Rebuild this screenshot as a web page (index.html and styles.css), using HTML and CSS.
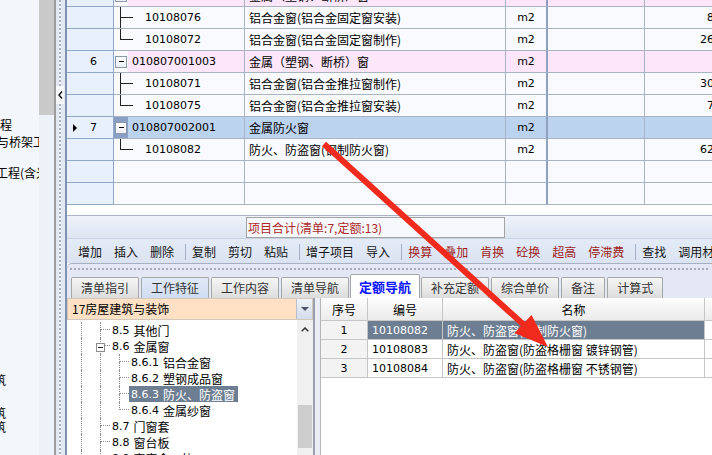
FILE: index.html
```html
<!DOCTYPE html>
<html lang="zh-CN">
<head>
<meta charset="utf-8">
<title>定额导航</title>
<link rel="stylesheet" href="styles.css">
</head>
<body>
<div class="app">
  <aside class="nav">
    <div class="nav-list">
      <div class="nav-item i1">工程</div>
      <div class="nav-item i2">与桥架工程</div>
      <div class="nav-item i3">工程(含光缆)</div>
      <div class="nav-item i4">建筑</div>
      <div class="nav-item i5">建筑</div>
      <div class="nav-item i6">建筑</div>
    </div>
    <div class="nav-scroll"><div class="nav-thumb"></div></div>
  </aside>
  <div class="divider"></div>
  <div class="splitter">
    <div class="collapse"><svg width="5" height="8" viewBox="0 0 5 8"><path d="M4 0.5 L1 4 L4 7.5" fill="none" stroke="#111" stroke-width="1.4"/></svg></div>
  </div>
  <main class="work">
    <div class="grid-view">
      <div class="rows">
        <div class="row pk">
          <div class="rh"><span class="no">5</span></div>
          <div class="code"><span class="exp"><span class="box"><i></i></span></span><span class="ctext">010807001002</span></div>
          <div class="name">金属（塑钢、断桥）窗</div>
          <div class="unit">m2</div><div class="c5"></div><div class="qty"></div>
        </div>
        <div class="row">
          <div class="rh"></div>
          <div class="code leaf"><span class="tl"><b class="up"></b><b class="dn"></b></span><span class="ltext">10108076</span></div>
          <div class="name">铝合金窗(铝合金固定窗安装)</div>
          <div class="unit">m2</div><div class="c5"></div><div class="qty">8</div>
        </div>
        <div class="row">
          <div class="rh"></div>
          <div class="code leaf"><span class="tl end"><b class="up"></b><b class="dn"></b></span><span class="ltext">10108072</span></div>
          <div class="name">铝合金窗(铝合金固定窗制作)</div>
          <div class="unit">m2</div><div class="c5"></div><div class="qty">26</div>
        </div>
        <div class="row pk">
          <div class="rh"><span class="no">6</span></div>
          <div class="code"><span class="exp"><span class="box"><i></i></span></span><span class="ctext">010807001003</span></div>
          <div class="name">金属（塑钢、断桥）窗</div>
          <div class="unit">m2</div><div class="c5"></div><div class="qty"></div>
        </div>
        <div class="row">
          <div class="rh"></div>
          <div class="code leaf"><span class="tl"><b class="up"></b><b class="dn"></b></span><span class="ltext">10108071</span></div>
          <div class="name">铝合金窗(铝合金推拉窗制作)</div>
          <div class="unit">m2</div><div class="c5"></div><div class="qty">30</div>
        </div>
        <div class="row">
          <div class="rh"></div>
          <div class="code leaf"><span class="tl end"><b class="up"></b><b class="dn"></b></span><span class="ltext">10108075</span></div>
          <div class="name">铝合金窗(铝合金推拉窗安装)</div>
          <div class="unit">m2</div><div class="c5"></div><div class="qty">7</div>
        </div>
        <div class="row sel">
          <div class="rh"><span class="mark"></span><span class="no">7</span></div>
          <div class="code"><span class="exp"><span class="box"><i></i></span></span><span class="ctext">010807002001</span></div>
          <div class="name">金属防火窗</div>
          <div class="unit">m2</div><div class="c5"></div><div class="qty"></div>
        </div>
        <div class="row">
          <div class="rh"></div>
          <div class="code leaf"><span class="tl end"><b class="up"></b><b class="dn"></b></span><span class="ltext">10108082</span></div>
          <div class="name">防火、防盗窗(钢制防火窗)</div>
          <div class="unit">m2</div><div class="c5"></div><div class="qty">62</div>
        </div>
        <div class="row">
          <div class="rh"></div><div class="code"></div><div class="name"></div>
          <div class="unit"></div><div class="c5"></div><div class="qty"></div>
        </div>
        <div class="row">
          <div class="rh"></div><div class="code"></div><div class="name"></div>
          <div class="unit"></div><div class="c5"></div><div class="qty"></div>
        </div>
      </div>
    </div>
    <div class="grid-foot"></div>
    <div class="status"><div class="summary">项目合计(清单:7,定额:13)</div></div>
    <div class="toolbar">
      <span class="grip"></span>
      <span class="tb">增加</span><span class="tb">插入</span><span class="tb">删除</span>
      <span class="sep"></span>
      <span class="tb">复制</span><span class="tb">剪切</span><span class="tb">粘贴</span>
      <span class="sep"></span>
      <span class="tb">增子项目</span><span class="tb">导入</span>
      <span class="sep"></span>
      <span class="tb red">换算</span><span class="tb red">叠加</span><span class="tb red">肯换</span><span class="tb red">砼换</span><span class="tb red">超高</span><span class="tb red">停滞费</span>
      <span class="sep"></span>
      <span class="tb">查找</span><span class="tb">调用材料</span>
    </div>
    <section class="panel">
      <div class="hgrip"></div>
      <div class="tabs">
        <span class="tab">清单指引</span>
        <span class="tab hot">工作特征</span>
        <span class="tab">工作内容</span>
        <span class="tab">清单导航</span>
        <span class="tab on">定额导航</span>
        <span class="tab">补充定额</span>
        <span class="tab">综合单价</span>
        <span class="tab">备注</span>
        <span class="tab">计算式</span>
      </div>
      <div class="panel-body">
        <div class="lpane">
          <div class="combo"><span class="combo-text">17房屋建筑与装饰</span><span class="combo-btn"><i></i></span></div>
          <div class="tree-wrap">
            <div class="tree">
              <div class="trow"><span class="ind p"><b></b></span><span class="ind t"><b class="up"></b><b class="dn"></b></span><span class="label"><span class="n">8.5</span> 其他门</span></div>
              <div class="trow"><span class="ind p"><b></b></span><span class="ind m"><span class="lines"><b class="up"></b><b class="dn"></b></span><span class="mbox"><i></i></span></span><span class="label"><span class="n">8.6</span> 金属窗</span></div>
              <div class="trow"><span class="ind p"><b></b></span><span class="ind p"><b></b></span><span class="ind t"><b class="up"></b><b class="dn"></b></span><span class="label"><span class="n">8.6.1</span> 铝合金窗</span></div>
              <div class="trow"><span class="ind p"><b></b></span><span class="ind p"><b></b></span><span class="ind t"><b class="up"></b><b class="dn"></b></span><span class="label"><span class="n">8.6.2</span> 塑钢成品窗</span></div>
              <div class="trow"><span class="ind p"><b></b></span><span class="ind p"><b></b></span><span class="ind t"><b class="up"></b><b class="dn"></b></span><span class="label cur"><span class="n">8.6.3</span> 防火、防盗窗</span></div>
              <div class="trow"><span class="ind p"><b></b></span><span class="ind p"><b></b></span><span class="ind t end"><b class="up"></b><b class="dn"></b></span><span class="label"><span class="n">8.6.4</span> 金属纱窗</span></div>
              <div class="trow"><span class="ind p"><b></b></span><span class="ind t"><b class="up"></b><b class="dn"></b></span><span class="label"><span class="n">8.7</span> 门窗套</span></div>
              <div class="trow"><span class="ind p"><b></b></span><span class="ind t"><b class="up"></b><b class="dn"></b></span><span class="label"><span class="n">8.8</span> 窗台板</span></div>
              <div class="trow"><span class="ind p"><b></b></span><span class="ind m"><span class="lines"><b class="up"></b><b class="dn"></b></span><span class="mbox"><i></i></span></span><span class="label"><span class="n">8.9</span> 窗帘盒、轨</span></div>
            </div>
            <div class="vscroll">
              <div class="vs-up"><svg width="8" height="5" viewBox="0 0 8 5"><path d="M0.7 4.3 L4 1 L7.3 4.3" fill="none" stroke="#333" stroke-width="1.5"/></svg></div>
              <div class="vs-thumb"></div>
            </div>
          </div>
        </div>
        <div class="gap"></div>
        <div class="rgrid">
          <div class="grow ghead"><span>序号</span><span>编号</span><span>名称</span><span></span></div>
          <div class="grow gsel"><span class="c1 n">1</span><span class="c2 n">10108082</span><span class="c3">防火、防盗窗(钢制防火窗)</span><span class="c4"></span></div>
          <div class="grow"><span class="c1 n">2</span><span class="c2 n">10108083</span><span class="c3">防火、防盗窗(防盗格栅窗 镀锌钢管)</span><span class="c4"></span></div>
          <div class="grow"><span class="c1 n">3</span><span class="c2 n">10108084</span><span class="c3">防火、防盗窗(防盗格栅窗 不锈钢管)</span><span class="c4"></span></div>
        </div>
      </div>
    </section>
  </main>
</div>
<svg class="arrow" width="712" height="455" viewBox="0 0 712 455">
  <line x1="324" y1="144" x2="524" y2="325" stroke="#f02a1c" stroke-width="6"/>
  <polygon points="548,347 514.5,333 531.5,315" fill="#f02a1c"/>
</svg>
</body>
</html>
```

FILE: styles.css
```css
* { box-sizing: border-box; }
html, body { margin: 0; padding: 0; }
body {
  width: 712px;
  height: 455px;
  overflow: hidden;
  position: relative;
  font-family: "Noto Sans CJK SC", "Liberation Sans", sans-serif;
  font-size: 12px;
  color: #000;
  background: #fff;
}
b, i { font-style: normal; font-weight: normal; display: block; }

.app { display: flex; width: 712px; height: 455px; }

/* left navigation */
.nav { display: flex; width: 54px; flex: none; background: #f3f6fb; }
.nav-list { width: 39px; overflow: hidden; padding-top: 118px; }
.nav-item { white-space: nowrap; line-height: 13px; height: 13px; }
.i1 { margin-left: -12px; }
.i2 { margin: 4px 0 0 -3px; }
.i3 { margin: 18px 0 0 -4px; }
.i4 { margin: 194px 0 0 -18px; }
.i5 { margin: 20px 0 0 -18px; }
.i6 { margin: 1px 0 0 -18px; }
.nav-scroll { width: 15px; background: #edf1f8; }
.nav-thumb { height: 115px; background: #c9c9c9; }

.divider { width: 2px; flex: none; background: #9c9c9c; }
.splitter {
  width: 9px;
  flex: none;
  background-color: #e3e9f3;
  background-image: repeating-linear-gradient(180deg, #a9b1bf 0 2px, #f6f8fb 2px 4px);
  background-size: 2px 100%;
  background-position: 3px 0;
  background-repeat: no-repeat;
  padding-top: 86px;
}
.collapse {
  width: 8px;
  height: 18px;
  background: #f5f7fb;
  display: flex;
  align-items: center;
  justify-content: center;
}

/* work area */
.work {
  flex: 1;
  min-width: 0;
  display: flex;
  flex-direction: column;
  border-left: 2px solid #7f92b0;
}
.grid-view { height: 205px; overflow: hidden; background: #fff; flex: none; }
.rows { margin-top: -15px; }
.row {
  display: grid;
  grid-template-columns: 47px 131px 261px 42px 97px 100px;
  height: 22px;
  font-family: "DejaVu Sans", sans-serif;
  font-size: 11px;
}
.row > div {
  border-right: 1px solid #a9b4c3;
  border-bottom: 1px solid #a9b4c3;
  background: #f9fafd;
  display: flex;
  align-items: center;
  white-space: nowrap;
  overflow: hidden;
}
.row > .rh {
  background: #e8f0fb;
  border-color: #8fa7c9;
  justify-content: flex-end;
  padding: 0 16px 0 6px;
}
.mark {
  width: 0; height: 0;
  border-left: 4px solid #000;
  border-top: 4px solid transparent;
  border-bottom: 4px solid transparent;
  margin-right: auto;
}
.row > .code { align-items: stretch; }
.exp {
  width: 14px;
  flex: none;
  display: flex;
  align-items: center;
  padding-left: 1px;
}
.box {
  width: 12px;
  height: 12px;
  border: 1px solid #8c98aa;
  background: linear-gradient(#ffffff, #eceff4);
  display: flex;
  align-items: center;
  justify-content: center;
}
.box i { width: 5px; height: 1px; background: #000; }
.ctext { flex: 1; display: flex; align-items: center; padding-left: 4px; }
.code.leaf { padding-left: 6px; }
.tl { width: 13px; flex: none; display: flex; flex-direction: column; }
.tl .up { height: 11px; border-left: 1px solid #222; border-bottom: 1px solid #222; }
.tl .dn { flex: 1; border-left: 1px solid #222; }
.tl.end .dn { border-left: 0; }
.ltext { display: flex; align-items: center; margin-left: 12px; }
.row > .name {
  font-family: "Noto Sans CJK SC", sans-serif;
  font-size: 12px;
  padding-left: 4px;
}
.row > .unit { justify-content: center; border-right: 2px solid #8ea2bf; }
.row > .qty { justify-content: flex-end; padding-right: 30px; }

.row.pk > .name, .row.pk > .unit, .row.pk > .c5, .row.pk > .qty, .row.pk .ctext { background: #fde6f9; }
.row.sel > .name, .row.sel > .unit, .row.sel > .c5, .row.sel > .qty, .row.sel .ctext { background: #bcd3f0; }
.row.sel .exp { background: #8a9fc6; }

.grid-foot { height: 10px; background: #fff; flex: none; }
.status {
  height: 23px;
  flex: none;
  border-top: 1px solid #a9b5c7;
  padding: 1px 0 0 179px;
  background: linear-gradient(#eef2f9, #dde5f2);
}
.summary {
  width: 259px;
  height: 21px;
  border: 1px solid #a3a3a3;
  background: #f6f8fc;
  color: #ad2828;
  padding-left: 1px;
  line-height: 19px;
  white-space: nowrap;
}

.toolbar {
  height: 25px;
  flex: none;
  display: flex;
  align-items: center;
  padding: 2px 0 0 3px;
  background: linear-gradient(#e4ebf7, #dbe3f2);
  border-top: 1px solid #c9d2e2;
  white-space: nowrap;
  overflow: hidden;
  color: #151515;
}
.grip {
  width: 2px;
  height: 15px;
  margin-right: 2px;
  background: repeating-linear-gradient(180deg, #9aa5b9 0 2px, transparent 2px 4px);
}
.tb { padding: 0 6px; line-height: 16px; flex: none; }
.tb.red { color: #9d1c1c; }
.sep { width: 1px; height: 16px; background: #a6b1c5; margin-left: 5px; flex: none; }

/* bottom panel */
.panel {
  flex: 1;
  min-height: 0;
  display: flex;
  flex-direction: column;
  border-top: 1px solid #a7b0c0;
  border-top-left-radius: 5px;
  background: #e3e8f4;
}
.hgrip {
  height: 2px;
  margin: 4px 3px 0 3px;
  background: repeating-linear-gradient(90deg, #a3abb9 0 2px, transparent 2px 4px);
  flex: none;
}
.tabs {
  height: 28px;
  flex: none;
  display: flex;
  align-items: flex-end;
  gap: 2px;
  padding-left: 4px;
  white-space: nowrap;
}
.tab {
  height: 21px;
  line-height: 20px;
  padding: 0 9px;
  border: 1px solid #a6a6a6;
  border-bottom: 0;
  border-radius: 2px 2px 0 0;
  background: linear-gradient(#f6f6f6, #dcdcdc);
  color: #333;
  flex: none;
}
.tab.hot { background: linear-gradient(#e0e9f7, #cfdcf1); }
.tab.on {
  height: 24px;
  line-height: 23px;
  padding: 0 8px;
  margin: 0 -1px;
  background: #fff;
  color: #0a14ff;
  font-weight: bold;
  font-size: 13px;
}

.panel-body { flex: 1; min-height: 0; display: flex; }
.lpane {
  width: 248px;
  flex: none;
  display: flex;
  flex-direction: column;
  background: #fff;
  border-right: 2px solid #9aa1ac;
}
.combo {
  height: 22px;
  flex: none;
  display: flex;
  background: #fee0c4;
  border: 1px solid #d3c8bc;
}
.combo-text { flex: 1; padding-left: 4px; line-height: 20px; white-space: nowrap; }
.combo-btn {
  width: 16px;
  background: linear-gradient(#eef2f8, #d3dcea);
  border-left: 1px solid #b5bfcd;
  display: flex;
  align-items: center;
  justify-content: center;
}
.combo-btn i {
  width: 0; height: 0;
  border-top: 4px solid #4b5566;
  border-left: 4px solid transparent;
  border-right: 4px solid transparent;
}
.tree-wrap { flex: 1; min-height: 0; display: flex; overflow: hidden; }
.tree { flex: 1; padding: 2px 0 0 5px; overflow: hidden; }
.trow { display: flex; height: 16px; white-space: nowrap; }
.ind { width: 19px; flex: none; display: flex; flex-direction: column; }
.ind.p b { flex: 1; margin-left: 9px; border-left: 1px dotted #8a8a8a; }
.ind .up { height: 8px; margin-left: 9px; border-left: 1px dotted #8a8a8a; border-bottom: 1px dotted #8a8a8a; }
.ind .dn { flex: 1; margin-left: 9px; border-left: 1px dotted #8a8a8a; }
.ind.end .dn { border-left: 0; }
.ind.m { display: grid; }
.ind.m > .lines { grid-area: 1 / 1; display: flex; flex-direction: column; }
.ind.m > .mbox {
  grid-area: 1 / 1;
  width: 9px;
  height: 9px;
  margin: 5px 0 0 5px;
  border: 1px solid #8c8c8c;
  background: #fff;
  display: flex;
  align-items: center;
  justify-content: center;
}
.mbox i { width: 5px; height: 1px; background: #222; }
.label { display: flex; align-items: center; padding: 0 3px 0 2px; height: 16px; }
.label.cur { background: #6d7e92; color: #fff; }
.n { font-family: "DejaVu Sans", sans-serif; font-size: 11px; }
.label .n { margin-right: 4px; }

.vscroll { width: 16px; flex: none; background: #f0f0f0; display: flex; flex-direction: column; }
.vs-up { height: 18px; display: flex; align-items: center; justify-content: center; }
.vs-thumb { height: 43px; margin: 67px 1px 0 1px; background: #cdcdcd; }

.gap { width: 5px; flex: none; background: #eaedf3; }
.rgrid { flex: 1; min-width: 0; background: #fff; border-left: 1px solid #b6b6b6; overflow: hidden; }
.grow { display: grid; grid-template-columns: 47px 75px 262px 30px; height: 19px; }
.grow > span {
  border-right: 1px solid #c6c6c6;
  border-bottom: 1px solid #c6c6c6;
  display: flex;
  align-items: center;
  white-space: nowrap;
  overflow: hidden;
}
.ghead { height: 23px; }
.ghead > span { justify-content: center; background: linear-gradient(#fdfdfd, #ebebeb); }
.grow > .c1 { justify-content: center; background: #f3f3f3; }
.grow > .c2 { padding-left: 4px; }
.grow > .c3 { padding-left: 4px; }
.gsel > .c2, .gsel > .c3 { background: #6d7e92; color: #fff; }

.arrow { position: absolute; left: 0; top: 0; pointer-events: none; }
```
